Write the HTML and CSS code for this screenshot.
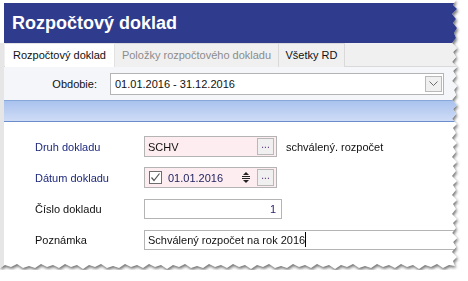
FILE: index.html
```html
<!DOCTYPE html>
<html lang="sk">
<head>
  <meta charset="UTF-8" />
  <title>Rozpočtový doklad</title>
  <link rel="stylesheet" href="styles.css">
</head>
<body>
  <div class="frame">
    <div class="window">
      <div class="titlebar">Rozpočtový doklad</div>
      <div class="content">
        <div class="tabs">
          <div class="tab active">Rozpočtový doklad</div>
          <div class="tab muted">Položky rozpočtového dokladu</div>
          <div class="tab last">Všetky RD</div>
        </div>

        <div class="filter">
          <span class="filter-label">Obdobie:</span>
          <div class="combo">
            <span>01.01.2016 - 31.12.2016</span>
            <span class="combo-btn">
              <svg width="9" height="6" viewBox="0 0 9 6"><path d="M0.5 0.5 L4.5 4.5 L8.5 0.5" fill="none" stroke="#6b6b6b" stroke-width="1"/></svg>
            </span>
          </div>
        </div>

        <div class="band"></div>

        <div class="form">
          <div class="row">
            <span class="lbl req">Druh dokladu</span>
            <div class="field pink short">
              <span class="val">SCHV</span>
              <span class="dots">...</span>
            </div>
            <span class="note">schválený. rozpočet</span>
          </div>

          <div class="row">
            <span class="lbl req">Dátum dokladu</span>
            <div class="field pink short">
              <span class="check">
                <svg width="11" height="11" viewBox="0 0 11 11"><path d="M1.5 5.5 L4 8.5 L9.5 1.5" fill="none" stroke="#555" stroke-width="1.2"/></svg>
              </span>
              <span class="val date">01.01.2016</span>
              <span class="spin">
                <svg width="14" height="15" viewBox="0 0 14 15"><path d="M4 5 L7 2 L10 5 Z" fill="#222"/><path d="M3 6.5 H11" stroke="#222"/><path d="M3 8.5 H11" stroke="#222"/><path d="M4 10 L7 13 L10 10 Z" fill="#222"/></svg>
              </span>
              <span class="dots">...</span>
            </div>
          </div>

          <div class="row">
            <span class="lbl">Číslo dokladu</span>
            <div class="field number">
              <span class="val">1</span>
            </div>
          </div>

          <div class="row">
            <span class="lbl">Poznámka</span>
            <div class="field wide">
              <span class="val">Schválený rozpočet na rok 2016</span><span class="caret"></span>
            </div>
          </div>
        </div>
      </div>
    </div>
  </div>
</body>
</html>
```

FILE: styles.css
```css
body {
  margin: 0;
  background: #fff;
  font-family: "Liberation Sans", Arial, sans-serif;
  font-size: 11px;
  color: #111;
}
.frame {
  filter: drop-shadow(1px 2px 1.5px rgba(0, 0, 0, 0.55));
}
.window {
  width: 460px;
  height: 270px;
  padding-top: 3px;
  box-sizing: border-box;
  background: #fff;
  display: flex;
  flex-direction: column;
  clip-path: polygon(0 0, 456px 0, 453px 5px, 457px 9px, 452px 14px, 456px 19px, 453px 23px, 457px 28px, 454px 33px, 456px 38px, 452px 43px, 457px 48px, 453px 52px, 456px 57px, 452px 62px, 457px 67px, 453px 71px, 456px 76px, 452px 81px, 457px 86px, 454px 90px, 456px 95px, 452px 100px, 457px 105px, 453px 109px, 456px 114px, 452px 119px, 457px 124px, 453px 128px, 456px 133px, 452px 138px, 457px 143px, 453px 147px, 456px 152px, 452px 157px, 457px 162px, 453px 166px, 456px 171px, 452px 176px, 457px 181px, 453px 185px, 456px 190px, 452px 195px, 457px 200px, 453px 204px, 456px 209px, 452px 214px, 457px 219px, 453px 223px, 456px 228px, 452px 233px, 457px 238px, 453px 242px, 456px 247px, 452px 252px, 457px 257px, 453px 261px, 455px 266px, 449px 265px, 443px 268px, 437px 264px, 431px 267px, 425px 265px, 419px 269px, 413px 265px, 407px 267px, 401px 264px, 395px 268px, 389px 265px, 383px 267px, 377px 264px, 371px 268px, 365px 266px, 359px 268px, 353px 264px, 347px 267px, 341px 265px, 335px 269px, 329px 265px, 323px 267px, 317px 264px, 311px 268px, 305px 265px, 299px 267px, 293px 264px, 287px 268px, 281px 266px, 275px 268px, 269px 264px, 263px 267px, 257px 265px, 251px 269px, 245px 265px, 239px 267px, 233px 264px, 227px 268px, 221px 265px, 215px 267px, 209px 264px, 203px 268px, 197px 266px, 191px 268px, 185px 264px, 179px 267px, 173px 265px, 167px 269px, 161px 265px, 155px 267px, 149px 264px, 143px 268px, 137px 265px, 131px 267px, 125px 264px, 119px 268px, 113px 266px, 107px 268px, 101px 264px, 95px 267px, 89px 265px, 83px 269px, 77px 265px, 71px 267px, 65px 264px, 59px 268px, 53px 265px, 47px 267px, 41px 264px, 35px 268px, 29px 266px, 23px 268px, 17px 264px, 11px 267px, 5px 265px, 0 268px);
}
.titlebar {
  margin-left: 4px;
  height: 40px;
  line-height: 40px;
  padding-left: 8px;
  background: #2f3b8d;
  color: #fff;
  font-size: 18px;
  font-weight: bold;
}
.content {
  flex: 1;
  border-left: 4px solid #e6e6e6;
  display: flex;
  flex-direction: column;
}
.tabs {
  display: flex;
  height: 24px;
  padding-left: 1px;
  background: #f0f0f0;
  border-bottom: 1px solid #d9d9d9;
  box-sizing: border-box;
}
.tab {
  height: 24px;
  line-height: 22px;
  text-align: center;
  box-sizing: border-box;
  border: 1px solid #d9d9d9;
  border-left: none;
  border-bottom: none;
  background: #f0f0f0;
  color: #111;
}
.tab.active {
  width: 110px;
  background: #fff;
  border-color: #e2e2e2;
}
.tab.muted {
  width: 164px;
  color: #8c8c8c;
}
.tab.last {
  width: 66px;
}
.filter {
  height: 33px;
  padding-top: 6px;
  box-sizing: border-box;
  background: #f4f6fa;
  display: flex;
}
.filter-label {
  width: 93px;
  text-align: right;
  line-height: 22px;
  margin-right: 13px;
}
.combo {
  width: 334px;
  height: 22px;
  box-sizing: border-box;
  border: 1px solid #b4b4b4;
  background: #fff;
  display: flex;
  align-items: center;
  justify-content: space-between;
  padding: 0 1px 0 4px;
}
.combo-btn {
  width: 17px;
  height: 16px;
  box-sizing: border-box;
  border: 1px solid #b9b9b9;
  background: #f0f0f0;
  display: flex;
  align-items: center;
  justify-content: center;
}
.band {
  height: 22px;
  box-sizing: border-box;
  border-top: 1px solid #87a6da;
  border-bottom: 1px solid #6b8dcb;
  background: linear-gradient(#a9c2ee, #cfdcf6);
}
.form {
  padding: 14px 0 0 31px;
  display: flex;
  flex-direction: column;
  gap: 10px;
}
.row {
  display: flex;
  align-items: center;
  height: 21px;
}
.lbl {
  width: 109px;
}
.lbl.req {
  color: #1f2a7c;
}
.field {
  height: 21px;
  box-sizing: border-box;
  border: 1px solid #b4b4b4;
  background: #fff;
  display: flex;
  align-items: center;
  padding: 0 2px 0 3px;
}
.field.pink {
  background: #fdedf1;
}
.field.short {
  width: 133px;
}
.field.number {
  width: 138px;
  height: 20px;
  justify-content: flex-end;
  padding-right: 5px;
  color: #2a1e6e;
}
.field.wide {
  flex: 1;
  height: 20px;
  border-right: none;
}
.val {
  flex: none;
}
.field.short .val {
  flex: 1;
}
.date {
  margin-left: 6px;
  color: #1a1f5c;
}
.check {
  width: 13px;
  height: 13px;
  box-sizing: border-box;
  border: 1px solid #6d6d6d;
  background: #fff;
  display: flex;
  align-items: center;
  justify-content: center;
  margin-left: 1px;
}
.spin {
  width: 14px;
  height: 15px;
  margin-right: 4px;
  display: flex;
}
.dots {
  width: 17px;
  height: 17px;
  box-sizing: border-box;
  border: 1px solid #b9b9b9;
  background: #f0f0f0;
  color: #5a2c7a;
  font-size: 10px;
  line-height: 12px;
  text-align: center;
}
.note {
  margin-left: 9px;
}
.caret {
  width: 1px;
  height: 15px;
  background: #000;
}
```
